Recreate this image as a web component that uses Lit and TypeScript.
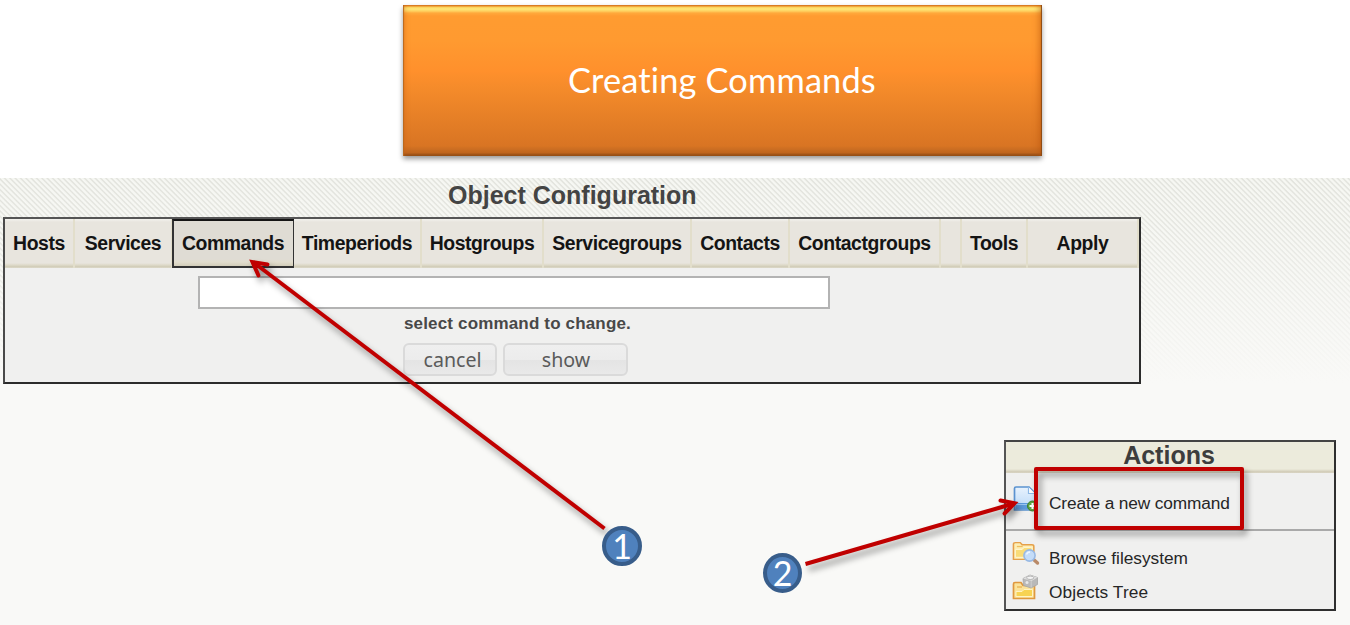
import { LitElement, html, css, svg } from "lit";
import { customElement, state } from "lit/decorators.js";
import { classMap } from "lit/directives/class-map.js";

const TABS = [
  "Hosts", "Services", "Commands", "Timeperiods", "Hostgroups",
  "Servicegroups", "Contacts", "Contactgroups", "", "Tools", "Apply",
];

@customElement("title-banner")
class TitleBanner extends LitElement {
  static styles = css`
    :host { display: block; }
    .banner {
      box-sizing: border-box;
      width: 639px;
      height: 151px;
      display: flex;
      align-items: center;
      justify-content: center;
      color: #fff;
      font: 34.4px/40px Lato, Carlito, sans-serif;
      letter-spacing: 0.15px;
      padding: 0 1px 1px 0;
      background:
        linear-gradient(to bottom, #f08f2c 0, #f08f2c 1px, #ffd75e 2px, #ffea7c 4px, #ffd261 6px, rgba(255, 175, 65, 0.7) 8px, rgba(255, 156, 48, 0) 11px),
        linear-gradient(to top, #8a4c18 0, #a8591c 2px, #c0671f 3px, rgba(197, 106, 33, 0.8) 6px, rgba(217, 118, 36, 0) 10px),
        linear-gradient(to bottom, #ff9c30 0, #ff9a30 36px, #ff902c 66px, #f38a2a 86px, #d87423 142px);
      box-shadow: 0 3px 5px rgba(0, 0, 0, 0.4),
        inset 1px 0 1px #b8691f, inset -1px 0 1px #8a4a15,
        inset 5px 0 5px -3px rgba(200, 95, 15, 0.4),
        inset -5px 0 6px -2px rgba(180, 80, 10, 0.5);
    }
  `;
  render() {
    return html`<div class="banner"><span>Creating Commands</span></div>`;
  }
}

@customElement("config-panel")
class ConfigPanel extends LitElement {
  @state() private active = "Commands";

  static styles = css`
    :host { display: block; }
    .panel {
      box-sizing: border-box;
      width: 1138px;
      height: 167px;
      border: 2px solid #2c2c2c;
      border-top-color: #555;
      border-left-color: #4a4a4a;
      background: #f0f0ef;
      font-family: "Liberation Sans", Arial, sans-serif;
    }
    .tabs {
      display: grid;
      grid-template-columns: 70px 98px 121px 128px 122px 148px 98px 151px 21px 66px 111px;
      height: 49px;
    }
    .tab {
      box-sizing: border-box;
      display: flex;
      align-items: center;
      justify-content: center;
      border-right: 2px solid #e2decb;
      background: linear-gradient(to bottom, #f3f2ee 0, #e8e5de 3px, #e8e5de 44px, #dedac9 46px, #cfcab5 48px, #e2dfd2 49px);
      color: #141414;
      font-size: 19.4px;
      font-weight: bold;
      letter-spacing: -0.42px;
      white-space: nowrap;
      padding: 0 0 1px;
    }
    .active {
      border: 2px solid #333;
      border-top-color: #151515;
      background: linear-gradient(to bottom, #dfdcd4 0, #dfdcd4 38px, #e2ddcd 41px, #cfcab5 46px);
      margin: 0 -1px 0 -1px;
      padding: 0 1px 1px 0;
      height: 49px;
    }
    .form {
      display: grid;
      justify-items: start;
      padding: 8px 0 0 193px;
    }
    .select {
      box-sizing: border-box;
      width: 632px;
      height: 33px;
      border: 2px solid #b3b3b3;
      background: #fff;
    }
    .hint {
      margin: 5px 0 0 206px;
      color: #484848;
      font-size: 17px;
      line-height: 20px;
      font-weight: bold;
      letter-spacing: 0.16px;
      white-space: nowrap;
    }
    .buttons {
      display: flex;
      gap: 6px;
      margin: 9px 0 0 205px;
    }
    .button {
      box-sizing: border-box;
      height: 33px;
      border: 2px solid #dadada;
      border-radius: 6px;
      padding: 1px 0 0;
      background: linear-gradient(to bottom, #efefef 0, #ececec 50%, #e4e4e4 51%, #e9e9e9 100%);
      color: #5a5a5a;
      font: 19.6px/28px "Noto Sans", "Open Sans", sans-serif;
    }
    .cancel { width: 94px; padding-left: 5px; }
    .show { width: 125px; padding-left: 1px; }
  `;
  render() {
    return html`<div class="panel">
      <div class="tabs">
        ${TABS.map((t) => html`<div
          class=${classMap({ tab: true, active: t === this.active })}
          @click=${() => { if (t) this.active = t; }}>${t}</div>`)}
      </div>
      <div class="form">
        <div class="select"></div>
        <div class="hint">select command to change.</div>
        <div class="buttons">
          <button class="button cancel">cancel</button>
          <button class="button show">show</button>
        </div>
      </div>
    </div>`;
  }
}

const folder = svg`
  <path d="M1.5 4.5q0-2 2-2h5l2 2.5h10q2 0 2 2v15h-21z" fill="#fdeeb5" stroke="#e5a04a" stroke-width="1.6"/>
  <path d="M3.5 10.5h7l2-2.5h8v11.500h-17z" fill="#f9dc78" stroke="#fff6d4" stroke-width="1"/>
  <path d="M5 7h6" stroke="#efbd5e" stroke-width="1.5"/>`;

const newDocIcon = html`<svg width="28" height="28" viewBox="0 0 28 28">
  <defs><linearGradient id="doc" x2="0" y2="1"><stop stop-color="#e8f2fd"/><stop offset="1" stop-color="#b9d8f8"/></linearGradient></defs>
  <path d="M4 2h13l6 6v17h-20.500V3.500q0-1.500 1.500-1.500z" fill="url(#doc)" stroke="#5b92d0" stroke-width="1.700"/>
  <path d="M16.500 2v6.500h6.500" fill="#fff" stroke="#8db8e6" stroke-width="1.200"/>
  <rect x="3.400" y="18" width="18.500" height="6.300" fill="#5c9bdd"/>
  <path d="M4 19.500h17" stroke="#9cc7f3" stroke-width="1"/>
  <circle cx="20.500" cy="21" r="5" fill="#5fa644" stroke="#3c7e2a"/>
  <path d="M20.500 18v6M17.500 21h6" stroke="#fff" stroke-width="2"/>
</svg>`;

const browseIcon = html`<svg width="28" height="28" viewBox="0 0 28 28">
  <g transform="translate(0 .5) scale(.97 .86)">${folder}</g>
  <path d="M21 19l4.500 4" stroke="#b98a68" stroke-width="3.400" stroke-linecap="round"/>
  <circle cx="17.500" cy="15.500" r="5.600" fill="#c4dcf8" stroke="#98b9e4" stroke-width="1.600"/>
  <path d="M14.500 14.500q1-2.500 3.500-2.500" stroke="#eef6ff" stroke-width="1.500" fill="none"/>
</svg>`;

const treeIcon = html`<svg width="28" height="28" viewBox="0 0 28 28">
  <path d="M1.500 10q0-1.500 1.500-1.500h6l2 3h11.500v13h-21z" fill="#fbe39a" stroke="#df983f" stroke-width="1.700"/>
  <path d="M4 17.500h6l2-2h8.500v7H4z" fill="#f7d353" stroke="#fff3c4" stroke-width="1"/>
  <path d="M5 13h5" stroke="#edb85a" stroke-width="1.500"/>
  <path d="M11 4.500l7-3.500 7.500 2.500v7l-6.500 3.500-7.500-2.500z" fill="#b9b9b9" stroke="#a6a6a6" stroke-width=".8"/>
  <path d="M11 4.500l7-3.500 7.500 2.500-6 3.500z" fill="#dedede"/>
  <path d="M19.200 7v6.500" stroke="#cfcfcf"/>
  <ellipse cx="18.200" cy="3.800" rx="3.600" ry="1.700" fill="#f3f3f3" stroke="#a8a8a8" stroke-width=".8"/>
  <circle cx="15" cy="8.500" r="1.500" fill="#e8e8e8"/>
</svg>`;

@customElement("actions-panel")
class ActionsPanel extends LitElement {
  static styles = css`
    :host { display: block; }
    .panel {
      box-sizing: border-box;
      width: 332px;
      height: 171px;
      border: 2px solid #2f2f2f;
      border-left-color: #555;
      border-top-color: #444;
      background: #f0f0ef;
      color: #262626;
      font: 17.3px/20px "Liberation Sans", Arial, sans-serif;
    }
    .head {
      box-sizing: border-box;
      height: 31px;
      text-align: center;
      color: #3d3d3d;
      font-weight: bold;
      font-size: 25px;
      line-height: 27px;
      padding-right: 2px;
      background: linear-gradient(to bottom, #ecebdc 0, #ecebdc 27px, #cfc9b4 30px, #dedacb 31px);
    }
    .row {
      display: grid;
      grid-template-columns: 37px 1fr;
      padding-left: 6px;
      white-space: nowrap;
    }
    .create {
      box-sizing: border-box;
      height: 58px;
      border-bottom: 2px solid #a9a9a9;
      padding-top: 12px;
    }
    .browse { height: 34px; padding-top: 9px; }
    .create .text { padding-top: 8px; letter-spacing: -0.14px; }
    .browse .text { padding-top: 8px; letter-spacing: -0.02px; }
    .tree .text { padding-top: 8px; letter-spacing: 0.1px; }
    svg { display: block; }
  `;
  render() {
    return html`<div class="panel">
      <div class="head">Actions</div>
      <div class="row create">${newDocIcon}<span class="text">Create a new command</span></div>
      <div class="row browse">${browseIcon}<span class="text">Browse filesystem</span></div>
      <div class="row tree">${treeIcon}<span class="text">Objects Tree</span></div>
    </div>`;
  }
}

@customElement("callout-layer")
class CalloutLayer extends LitElement {
  static styles = css`
    :host { display: block; pointer-events: none; }
    svg { display: block; }
    .line { fill: none; stroke: #c00000; stroke-width: 4; }
    .shadow { filter: drop-shadow(3px 5px 3px rgba(0, 0, 0, 0.4)); }
    .disc { fill: #4f81bd; stroke: #385d8a; stroke-width: 4; }
    .num { fill: #fff; font: 34px Lato, Carlito, sans-serif; text-anchor: middle; }
  `;
  render() {
    return html`<svg width="1350" height="625" viewBox="0 0 1350 625">
      <g class="shadow">
        <path class="line" d="M604.500 528.500L253 262"/>
        <path class="line" stroke-linecap="round" stroke-linejoin="miter" d="M267.500 264.500L252.500 262L258.500 275.500"/>
      </g>
      <g class="shadow">
        <path class="line" d="M805.500 564L1014 503.500"/>
        <path class="line" stroke-linecap="round" d="M1000.500 500.500L1014.500 503.300L1004.500 513.500"/>
      </g>
      <rect class="line shadow" x="1036" y="469" width="206" height="59" stroke-linejoin="round"/>
      <circle class="disc" cx="622" cy="546" r="18"/>
      <text class="num" x="622" y="559">1</text>
      <ellipse class="disc" cx="782.500" cy="573" rx="17.500" ry="18"/>
      <text class="num" x="782.500" y="585.500">2</text>
    </svg>`;
  }
}

@customElement("app-root")
class AppRoot extends LitElement {
  static styles = css`
    :host {
      display: block;
      position: relative;
      width: 1350px;
      height: 625px;
      overflow: hidden;
      background: #fff;
    }
    .top {
      box-sizing: border-box;
      height: 178px;
      padding: 5px 0 0 403px;
    }
    .page {
      box-sizing: border-box;
      height: 447px;
      background:
        linear-gradient(to bottom, rgba(249, 249, 247, 0) 0, rgba(249, 249, 247, 0.15) 50px, #f9f9f7 205px),
        repeating-linear-gradient(45deg, #f7f8f4 0, #f5f6f1 1.3px, #e1e2dc 2.4px, #e4e5df 2.9px, #f7f8f4 3.770px);
    }
    .heading {
      margin: 0;
      height: 39px;
      padding-left: 448px;
      color: #444;
      font: bold 25px/35px "Liberation Sans", Arial, sans-serif;
      white-space: nowrap;
    }
    .config { padding-left: 3px; }
    .actions { padding: 56px 0 0 1004px; }
    .callouts { position: absolute; inset: 0; }
  `;
  render() {
    return html`
      <div class="top"><title-banner></title-banner></div>
      <div class="page">
        <h1 class="heading">Object Configuration</h1>
        <config-panel class="config"></config-panel>
        <actions-panel class="actions"></actions-panel>
      </div>
      <callout-layer class="callouts"></callout-layer>`;
  }
}
